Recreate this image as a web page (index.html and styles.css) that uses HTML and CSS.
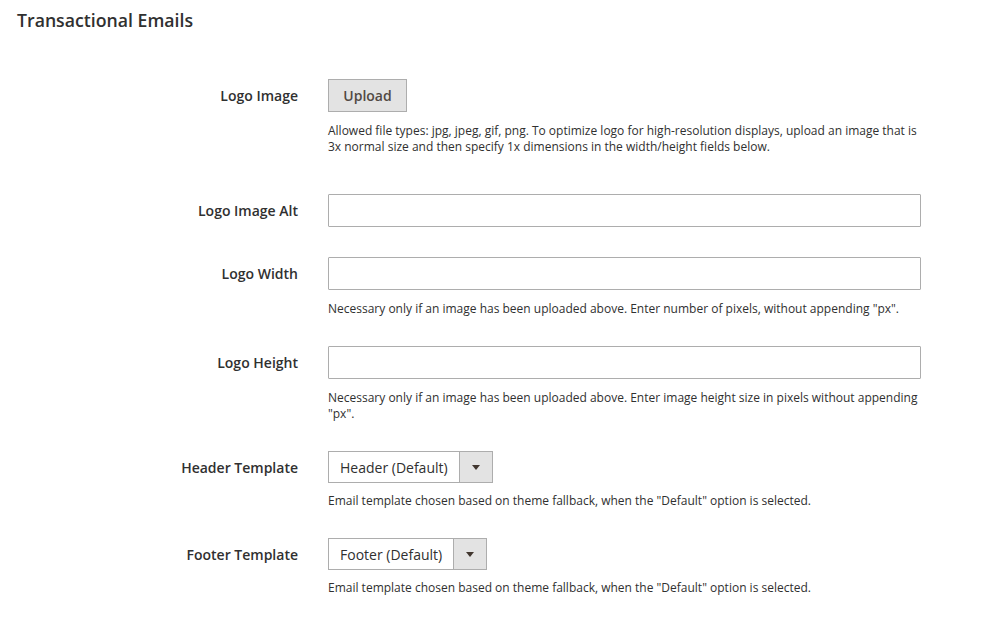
FILE: index.html
```html
<!DOCTYPE html>
<html lang="en">
<head>
<meta charset="utf-8">
<title>Transactional Emails</title>
<link rel="stylesheet" href="styles.css">
</head>
<body>
<div class="page">
  <h2 class="section-title">Transactional Emails</h2>
  <div class="form">
    <div class="row row-first">
      <div class="label">Logo Image</div>
      <div class="control">
        <button class="btn-upload" type="button">Upload</button>
        <p class="note">Allowed file types: jpg, jpeg, gif, png. To optimize logo for high-resolution displays, upload an image that is 3x normal size and then specify 1x dimensions in the width/height fields below.</p>
      </div>
    </div>
    <div class="row">
      <div class="label">Logo Image Alt</div>
      <div class="control">
        <input class="text-input" type="text">
      </div>
    </div>
    <div class="row">
      <div class="label">Logo Width</div>
      <div class="control">
        <input class="text-input" type="text">
        <p class="note">Necessary only if an image has been uploaded above. Enter number of pixels, without appending "px".</p>
      </div>
    </div>
    <div class="row">
      <div class="label">Logo Height</div>
      <div class="control">
        <input class="text-input" type="text">
        <p class="note">Necessary only if an image has been uploaded above. Enter image height size in pixels without appending "px".</p>
      </div>
    </div>
    <div class="row">
      <div class="label">Header Template</div>
      <div class="control">
        <div class="select"><span class="select-value">Header (Default)</span><span class="select-arrow"><span class="caret"></span></span></div>
        <p class="note note-select">Email template chosen based on theme fallback, when the "Default" option is selected.</p>
      </div>
    </div>
    <div class="row">
      <div class="label">Footer Template</div>
      <div class="control">
        <div class="select"><span class="select-value">Footer (Default)</span><span class="select-arrow"><span class="caret"></span></span></div>
        <p class="note note-select">Email template chosen based on theme fallback, when the "Default" option is selected.</p>
      </div>
    </div>
  </div>
</div>
</body>
</html>
```
FILE: styles.css
```css
* {
  box-sizing: border-box;
}

html, body {
  margin: 0;
  padding: 0;
  background: #ffffff;
}

body {
  font-family: "Open Sans", "Liberation Sans", sans-serif;
  color: #303030;
}

.page {
  padding-top: 8px;
}

.section-title {
  margin: 0 0 0 17px;
  font-size: 17.7px;
  font-weight: 600;
  line-height: 24px;
  color: #303030;
}

.form {
  margin-top: 47px;
}

.row {
  display: grid;
  grid-template-columns: 298px 593px;
  column-gap: 30px;
  margin-bottom: 30px;
}

.row-first {
  margin-bottom: 40px;
}

.label {
  text-align: right;
  font-size: 14px;
  font-weight: 600;
  line-height: 19px;
  padding-top: 7px;
  color: #303030;
}

.control {
  display: flex;
  flex-direction: column;
  align-items: flex-start;
}

.btn-upload {
  height: 33px;
  width: 79px;
  padding: 0;
  background: #e3e3e3;
  border: 1px solid #adadad;
  border-radius: 0;
  font-family: "Open Sans", "Liberation Sans", sans-serif;
  font-size: 14px;
  font-weight: 600;
  color: #514943;
}

.text-input {
  width: 593px;
  height: 33px;
  border: 1px solid #adadad;
  border-radius: 1px;
  padding: 0 10px;
  font-family: "Open Sans", "Liberation Sans", sans-serif;
  font-size: 14px;
  background: #ffffff;
  margin: 0;
}

.note {
  margin: 11px 0 -1px 0;
  font-size: 12px;
  line-height: 16px;
  color: #303030;
}

.note-select {
  margin-top: 10px;
}

.select {
  display: inline-flex;
  height: 32px;
  border: 1px solid #adadad;
  background: #ffffff;
}

.select-value {
  display: flex;
  align-items: center;
  padding: 0 11px 0 11px;
  font-size: 14px;
  color: #303030;
  line-height: 19px;
}

.select-arrow {
  width: 33px;
  display: flex;
  align-items: center;
  justify-content: center;
  background: #e3e3e3;
  border-left: 1px solid #adadad;
}

.caret {
  width: 0;
  height: 0;
  border-left: 4px solid transparent;
  border-right: 4px solid transparent;
  border-top: 5px solid #41362f;
}
```
